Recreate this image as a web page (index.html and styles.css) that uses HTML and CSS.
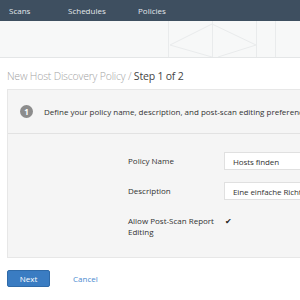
FILE: index.html
```html
<!DOCTYPE html>
<html lang="en">
<head>
  <meta charset="UTF-8" />
  <title>New Host Discovery Policy</title>
  <link rel="stylesheet" href="styles.css">
</head>
<body>
  <nav class="topbar">
    <a href="#" class="nav-link">Scans</a>
    <a href="#" class="nav-link">Schedules</a>
    <a href="#" class="nav-link">Policies</a>
  </nav>

  <div class="band">
    <svg class="band-art" width="132" height="36" viewBox="0 0 132 36">
      <g stroke="#e9ebec" stroke-width="1" fill="none">
        <line x1="0.5" y1="0" x2="0.5" y2="36"/>
        <line x1="44.5" y1="0" x2="44.5" y2="36"/>
        <line x1="88.5" y1="0" x2="88.5" y2="36"/>
        <line x1="107.5" y1="0" x2="107.5" y2="36"/>
        <polyline points="44,3 2,24 44,36"/>
        <polyline points="44,3 88,24 50,36"/>
      </g>
    </svg>
  </div>

  <div class="page">
    <h1 class="title">New Host Discovery Policy / <span class="step">Step 1 of 2</span></h1>

    <div class="panel">
      <div class="info">
        <span class="badge">1</span>
        <span class="info-text">Define your policy name, description, and post-scan editing preferences.</span>
      </div>
      <div class="form">
        <label class="label">Policy Name</label>
        <input class="field" type="text" value="Hosts finden">
        <label class="label">Description</label>
        <input class="field" type="text" value="Eine einfache Richtlinie">
        <label class="label label-wrap">Allow Post-Scan Report Editing</label>
        <span class="check">&#10004;</span>
      </div>
    </div>

    <div class="actions">
      <button class="btn-next">Next</button>
      <a href="#" class="cancel">Cancel</a>
    </div>
  </div>
</body>
</html>
```

FILE: styles.css
```css
body {
  margin: 0;
  font-family: "Open Sans", sans-serif;
  background: #fff;
  color: #444;
  overflow: hidden;
}
.topbar {
  height: 21px;
  background: #3e4f60;
  display: flex;
  align-items: center;
  padding-left: 9px;
}
.nav-link {
  color: #e3e8ec;
  text-decoration: none;
  font-size: 8px;
}
.nav-link:nth-child(1) { width: 59px; }
.nav-link:nth-child(2) { width: 70px; }
.band {
  height: 36px;
  background: #f7f8f8;
  border-bottom: 1px solid #e4e6e7;
  padding-left: 168px;
}
.band-art {
  display: block;
}
.page {
  padding: 0 0 0 7px;
}
.title {
  font-size: 10.5px;
  font-weight: 300;
  color: #a3a3a3;
  margin: 10px 0 0;
  height: 21px;
  line-height: 16px;
  letter-spacing: -0.2px;
}
.step {
  color: #444;
  font-weight: 400;
}
.panel {
  background: #f5f5f5;
  border: 1px solid #e7e7e7;
  margin-right: -20px;
  height: 167px;
}
.info {
  height: 43px;
  display: flex;
  align-items: center;
  padding-left: 12px;
  border-bottom: 1px solid #e2e2e2;
}
.badge {
  width: 13px;
  height: 13px;
  border-radius: 50%;
  background: #8c8c8c;
  color: #fff;
  font-size: 8px;
  font-weight: 700;
  display: flex;
  align-items: center;
  justify-content: center;
  margin-right: 11px;
}
.info-text {
  font-size: 8px;
  white-space: nowrap;
  color: #333;
}
.form {
  display: grid;
  grid-template-columns: 96px 120px;
  grid-auto-rows: 18px;
  row-gap: 12px;
  padding: 18px 0 0 120px;
  align-items: center;
}
.label {
  font-size: 8px;
  color: #333;
  line-height: 10px;
}
.label-wrap {
  align-self: start;
  margin-top: 3px;
  line-height: 11px;
}
.field {
  height: 18px;
  box-sizing: border-box;
  border: 1px solid #e0e0e0;
  background: #fff;
  font-family: "Open Sans", sans-serif;
  font-size: 8px;
  letter-spacing: -0.1px;
  color: #333;
  padding: 0 8px;
  width: 120px;
}
.check {
  font-size: 8px;
  color: #222;
  align-self: start;
  margin-top: 3px;
  padding-left: 1px;
}
.actions {
  display: flex;
  align-items: center;
  margin-top: 12px;
}
.btn-next {
  width: 43px;
  height: 17px;
  background: #3a7cc2;
  border: 1px solid #2f6aa8;
  border-radius: 2px;
  color: #fff;
  font-family: "Open Sans", sans-serif;
  font-size: 8px;
  padding: 0;
  margin-right: 23px;
}
.cancel {
  color: #4a8ad0;
  text-decoration: none;
  font-size: 8px;
}
```
